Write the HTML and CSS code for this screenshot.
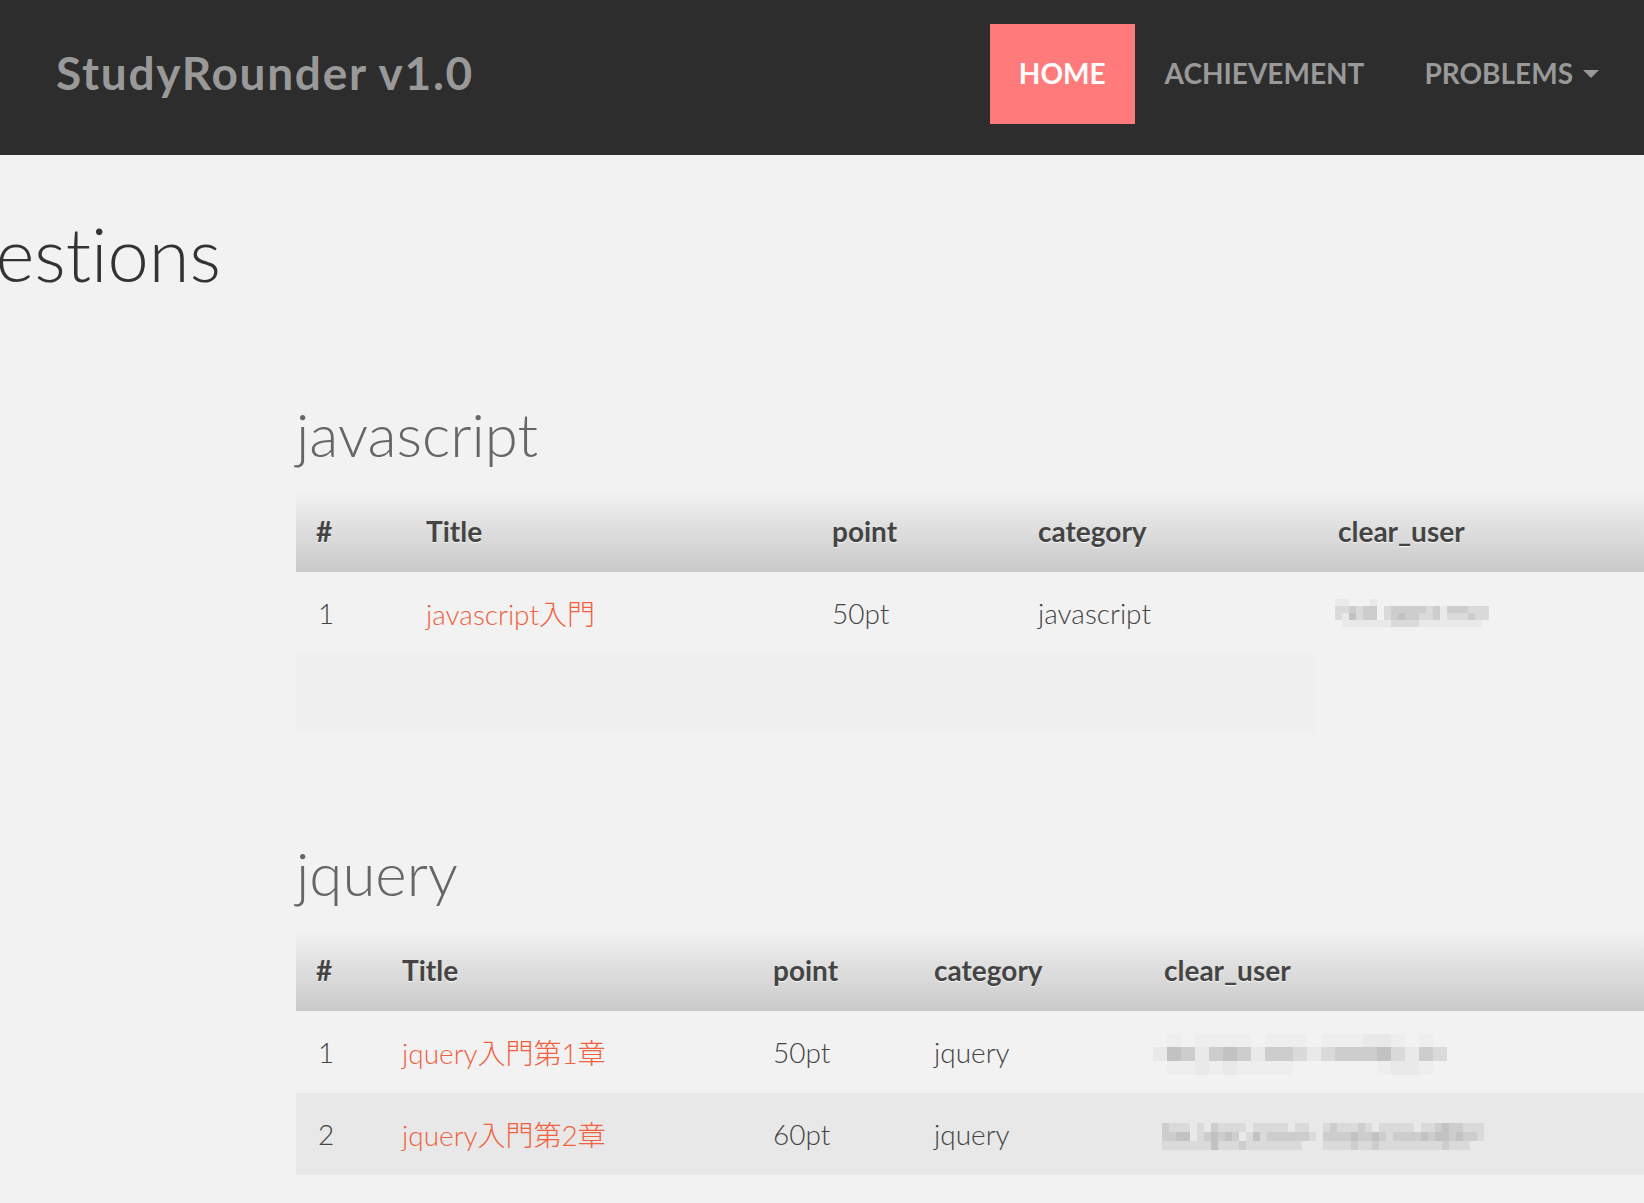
FILE: index.html
```html
<!DOCTYPE html>
<html lang="ja">
<head>
<meta charset="utf-8">
<title>StudyRounder v1.0</title>
<link rel="stylesheet" href="styles.css">
</head>
<body>
<header class="navbar">
  <a class="brand" href="#">StudyRounder v1.0</a>
  <nav class="nav">
    <a class="nav-item active" href="#">HOME</a>
    <a class="nav-item" href="#">ACHIEVEMENT</a>
    <a class="nav-item" href="#">PROBLEMS<span class="caret"></span></a>
  </nav>
</header>
<main class="page">
  <div class="page-title"><h1>Questions</h1></div>

  <section class="cat cat-js">
    <h2>javascript</h2>
    <table class="qtable">
      <thead>
        <tr><th class="c1">#</th><th class="c2">Title</th><th class="c3">point</th><th class="c4">category</th><th class="c5">clear_user</th></tr>
      </thead>
      <tbody>
        <tr><td>1</td><td><a href="#">javascript入門</a></td><td>50pt</td><td>javascript</td><td><div class="mosaic mz-a" data-rows="1100010000000000000000|2232330233333231333222|2142330234332231222322|0111111122221111111110"></div></td></tr>
      </tbody>
    </table>
    <div class="ghost"></div>
  </section>

  <section class="cat cat-jq">
    <h2>jquery</h2>
    <table class="qtable">
      <thead>
        <tr><th class="c1">#</th><th class="c2">Title</th><th class="c3">point</th><th class="c4">category</th><th class="c5">clear_user</th></tr>
      </thead>
      <tbody>
        <tr><td>1</td><td><a href="#">jquery入門第1章</a></td><td>50pt</td><td>jquery</td><td><div class="mosaic mz-b" data-rows="050555505550555115050|143134313321233342132|055151555500000051150"></div></td></tr>
        <tr class="alt"><td>2</td><td><a href="#">jquery入門第2章</a></td><td>60pt</td><td>jquery</td><td><div class="mosaic mz-c" data-rows="3222121322221222221221023222321222221223433222|3344123434312423333332033334334323333434434332|2222222422232222222211022223223222222222322211"></div></td></tr>
      </tbody>
    </table>
  </section>
</main>
<script src="mosaic.js"></script>
</body>
</html>
```

FILE: mosaic.js
```js
document.querySelectorAll('.mosaic').forEach(function (m) {
  m.getAttribute('data-rows').split('|').forEach(function (row) {
    var r = document.createElement('div');
    r.className = 'mz-row';
    row.split('').forEach(function (ch) {
      var b = document.createElement('span');
      b.className = 'mz s' + ch;
      r.appendChild(b);
    });
    m.appendChild(r);
  });
});
```

FILE: styles.css
```css
* { box-sizing: border-box; }

html, body {
  margin: 0;
  padding: 0;
  overflow: hidden;
}

body {
  background: #f2f2f2;
  font-family: "Lato", "Noto Sans CJK JP", sans-serif;
  font-variant-ligatures: none;
  color: #444;
  width: 1644px;
  height: 1203px;
}

a { text-decoration: none; }

/* navbar */
.navbar {
  height: 155px;
  background: #2d2d2d;
  display: flex;
  align-items: flex-start;
  padding: 24px 15px 0 56px;
}

.brand {
  font-size: 46px;
  font-weight: 700;
  line-height: 98px;
  color: #999;
  letter-spacing: 1.7px;
}

.nav {
  margin-left: auto;
  display: flex;
}

.nav-item {
  display: flex;
  align-items: center;
  height: 100px;
  padding: 0 30px 2px;
  font-size: 28px;
  font-weight: 700;
  color: #999;
}

.nav-item.active {
  background: #ff7b7b;
  color: #fff;
  padding: 0 29px 2px;
}

.caret {
  display: inline-block;
  width: 0;
  height: 0;
  margin-left: 10px;
  margin-top: 2px;
  border-top: 8px solid #999;
  border-left: 8px solid transparent;
  border-right: 8px solid transparent;
}

/* page */
.page {
  padding-top: 55px;
}

.page-title {
  display: flex;
  justify-content: flex-end;
  width: 221px;
  white-space: nowrap;
}

.page-title h1 {
  margin: 0;
  font-size: 74px;
  font-weight: 300;
  line-height: 1.2;
  color: #333;
}

.cat {
  margin-left: 296px;
}

.cat h2 {
  margin: 0 0 20px;
  font-size: 60px;
  font-weight: 300;
  line-height: 1.2;
  color: #666;
}

.cat-js { margin-top: 99px; }
.cat-jq { margin-top: 103px; }

.qtable {
  border-collapse: collapse;
  border-spacing: 0;
  width: 1500px;
  table-layout: fixed;
}

.qtable th,
.qtable td {
  height: 82px;
  padding: 0 0 0 22px;
  text-align: left;
  vertical-align: middle;
  font-size: 28px;
  white-space: nowrap;
}

.qtable thead tr {
  background: linear-gradient(to bottom, #f3f3f3 0%, #e3e3e3 35%, #d6d6d6 70%, #c9c9c9 100%);
}

.qtable th {
  font-weight: 700;
  color: #444;
  text-shadow: 0 1px 0 rgba(255, 255, 255, 0.8);
}

.qtable th.c1 { padding-left: 20px; }

.qtable td {
  font-weight: 300;
  color: #444;
}

.qtable td a {
  color: #f0613f;
}

.qtable tr.alt { background: #e8e8e8; }

.cat-js .c1 { width: 108px; }
.cat-js .c2 { width: 406px; }
.cat-js .c3 { width: 206px; }
.cat-js .c4 { width: 300px; }

.cat-jq .c1 { width: 84px; }
.cat-jq .c2 { width: 371px; }
.cat-jq .c3 { width: 161px; }
.cat-jq .c4 { width: 230px; }

.ghost {
  width: 1021px;
  height: 80px;
  background: #f0f0f0;
  border-radius: 0 0 6px 0;
}

/* blurred user names */
.mosaic {
  display: flex;
  flex-direction: column;
}

.mz-row { display: flex; }

.mz { display: block; }

.mz-a { margin-left: -3px; }
.mz-a .mz { width: 7px; height: 7px; }

.mz-b { margin-left: -11px; margin-top: 5px; }
.mz-b .mz { width: 14px; height: 13.7px; }

.mz-c { margin-left: -2px; margin-top: 5px; }
.mz-c .mz { width: 7px; height: 9px; }

.s0 { background: transparent; }
.s1 { background: #e9e9e9; }
.s2 { background: #dadada; }
.s3 { background: #cdcdcd; }
.s4 { background: #c2c2c2; }
.s5 { background: #eeeeee; }
```
